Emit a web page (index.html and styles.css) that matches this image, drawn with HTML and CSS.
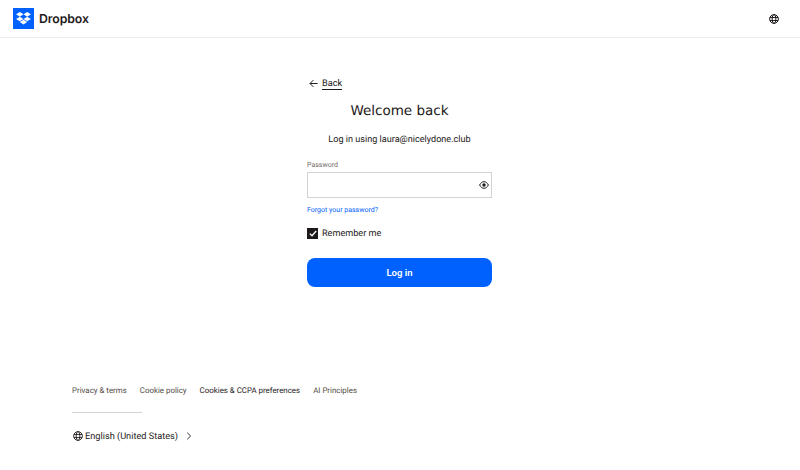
FILE: index.html
```html
<!DOCTYPE html>
<html>
<head>
    <title>Dropbox - Log in</title>
    <link rel="stylesheet" href="styles.css">
</head>
<body>
    <header class="topbar">
        <a class="brand" href="#">
            <span class="brand-mark">
                <svg width="15" height="13" viewBox="0 0 16 14" fill="#fff">
                    <path d="M4 0 8 2.500 4 5 0 2.500Z"/>
                    <path d="M12 0 16 2.500 12 5 8 2.500Z"/>
                    <path d="M0 7.500 4 5 8 7.500 4 10Z"/>
                    <path d="M16 7.500 12 5 8 7.500 12 10Z"/>
                    <path d="M4 10.800 8 8.300 12 10.800 8 13.400Z"/>
                </svg>
            </span>
            <span class="brand-name">Dropbox</span>
        </a>
        <svg class="globe" width="10" height="10" viewBox="0 0 16 16" fill="none" stroke="#1e1919" stroke-width="1.600">
            <circle cx="8" cy="8" r="7"/>
            <ellipse cx="8" cy="8" rx="3" ry="7"/>
            <path d="M1.500 5.500h13M1.500 10.500h13"/>
        </svg>
    </header>

    <main class="login">
        <a class="back" href="#">
            <svg width="9" height="9" viewBox="0 0 12 12" fill="none" stroke="#1e1919" stroke-width="1.300">
                <path d="M11.500 6H1.500M5.800 1.500 1.300 6l4.500 4.500"/>
            </svg>
            <span>Back</span>
        </a>
        <h1>Welcome back</h1>
        <p class="using">Log in using laura@nicelydone.club</p>
        <label class="field-label" for="password">Password</label>
        <div class="field">
            <input id="password" type="password">
            <svg width="10" height="8" viewBox="0 0 10 8" fill="none" stroke="#1e1919" stroke-width="1">
                <path d="M.6 4C1.800 1.800 3.300.7 5 .7S8.200 1.800 9.400 4C8.200 6.200 6.700 7.300 5 7.300S1.800 6.200.6 4Z"/>
                <circle cx="5" cy="4" r="1.700" fill="#1e1919" stroke="none"/>
            </svg>
        </div>
        <a class="forgot" href="#">Forgot your password?</a>
        <div class="remember">
            <span class="checkbox">
                <svg width="8" height="7" viewBox="0 0 8 7" fill="none" stroke="#fff" stroke-width="1.300">
                    <path d="M.8 3.600 3 5.700 7.200 1"/>
                </svg>
            </span>
            <span class="remember-text">Remember me</span>
        </div>
        <button class="submit" type="button">Log in</button>
    </main>

    <footer class="footer">
        <nav class="footer-links">
            <a href="#">Privacy &amp; terms</a>
            <a href="#">Cookie policy</a>
            <a class="dark" href="#">Cookies &amp; CCPA preferences</a>
            <a href="#">AI Principles</a>
        </nav>
        <div class="footer-rule"></div>
        <div class="language">
            <svg width="10" height="10" viewBox="0 0 16 16" fill="none" stroke="#1e1919" stroke-width="1.400">
                <circle cx="8" cy="8" r="7"/>
                <ellipse cx="8" cy="8" rx="3" ry="7"/>
                <path d="M1.500 5.500h13M1.500 10.500h13"/>
            </svg>
            <span>English (United States)</span>
            <svg class="chevron" width="6" height="8" viewBox="0 0 6 9" fill="none" stroke="#1e1919" stroke-width="1">
                <path d="M1 .8 4.800 4.500 1 8.200"/>
            </svg>
        </div>
    </footer>
</body>
</html>
```

FILE: styles.css
```css
* {
    box-sizing: border-box;
}
html, body {
    height: 100%;
}
body {
    margin: 0;
    background: #fff;
    color: #1e1919;
    font-family: Roboto, "Liberation Sans", sans-serif;
    text-rendering: geometricPrecision;
    display: flex;
    flex-direction: column;
    overflow: hidden;
}
a {
    color: inherit;
    text-decoration: none;
}
.topbar {
    height: 38px;
    flex: none;
    display: flex;
    align-items: center;
    justify-content: space-between;
    padding: 0 21px 0 13px;
    border-bottom: 1px solid #eeedeb;
}
.brand {
    display: flex;
    align-items: center;
    gap: 5px;
}
.brand-mark {
    width: 21px;
    height: 21px;
    background: #0061fe;
    display: flex;
    align-items: center;
    justify-content: center;
}
.brand-name {
    font-family: Inter, sans-serif;
    font-size: 12.300px;
    font-weight: 600;
    letter-spacing: -0.1px;
}
.login {
    width: 186px;
    margin: 0 auto;
    padding: 38px 1px 0 0;
    flex: none;
    display: flex;
    flex-direction: column;
}
.back {
    display: flex;
    align-items: center;
    gap: 4px;
    padding-left: 2px;
    height: 15px;
    font-size: 9.200px;
}
.back span {
    border-bottom: 1px solid #1e1919;
    line-height: 11px;
}
.login h1 {
    margin: 10px 0 0;
    height: 20px;
    font-family: "DejaVu Sans", sans-serif;
    font-size: 13.500px;
    line-height: 20px;
    font-weight: 400;
    text-align: center;
    white-space: nowrap;
}
.using {
    margin: 12px 0 0;
    height: 14px;
    font-size: 9.100px;
    line-height: 14px;
    text-align: center;
    white-space: nowrap;
}
.field-label {
    margin-top: 13px;
    height: 10px;
    font-size: 7px;
    line-height: 10px;
    color: #736c64;
}
.field {
    margin-top: 2px;
    height: 26px;
    border: 1px solid #d6d3cf;
    display: flex;
    align-items: center;
    padding-right: 2px;
}
.field input {
    flex: 1;
    min-width: 0;
    height: 100%;
    border: 0;
    outline: 0;
    background: none;
}
.forgot {
    margin-top: 7px;
    height: 10px;
    font-size: 7px;
    line-height: 10px;
    color: #0061fe;
}
.remember {
    margin-top: 12px;
    display: flex;
    align-items: center;
    gap: 4px;
    height: 12px;
    font-size: 9.100px;
}
.remember-text {
    padding-top: 2px;
}
.checkbox {
    width: 11px;
    height: 11px;
    background: #1e1919;
    display: flex;
    align-items: center;
    justify-content: center;
}
.submit {
    margin-top: 19px;
    height: 29px;
    border: 0;
    border-radius: 8px;
    background: #0061fe;
    color: #fff;
    font-family: inherit;
    font-size: 9.500px;
    font-weight: 600;
}
.footer {
    margin-top: auto;
    padding: 0 0 27px 72px;
}
.footer-links {
    display: flex;
    gap: 13px;
    font-size: 7.900px;
    line-height: 12px;
    color: #524a44;
}
.footer-links .dark {
    color: #1e1919;
}
.footer-rule {
    width: 70px;
    height: 1px;
    margin-top: 15px;
    background: #d6d3cf;
}
.language {
    margin-top: 16px;
    padding-left: 1px;
    display: flex;
    align-items: center;
    gap: 2px;
    height: 14px;
    font-size: 9.200px;
}
.chevron {
    margin-left: 6px;
}
```
